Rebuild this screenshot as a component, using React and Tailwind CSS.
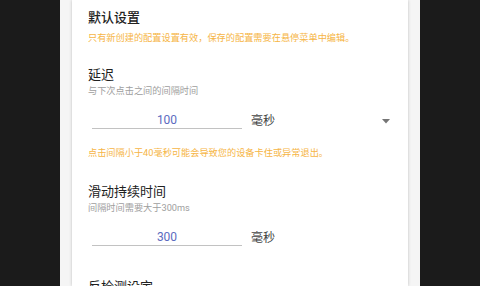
export default function App() {
  return (
    <div
      className="flex h-[286px] w-[480px] justify-center overflow-hidden bg-[#1b1b1b]"
      style={{ fontFamily: 'Roboto, "Noto Sans CJK SC", sans-serif' }}
    >
      <div className="h-full w-[360px] bg-[#f5f5f5] px-3">
        <div className="h-full bg-white px-4 pt-[10px] shadow-[0_0_3px_rgba(0,0,0,0.22)]">
          <SectionHeader
            title="默认设置"
            warning="只有新创建的配置设置有效，保存的配置需要在悬停菜单中编辑。"
          />

          <Field title="延迟" hint="与下次点击之间的间隔时间" className="mt-[23px]" />
          <NumberRow value="100" unit="毫秒" withSelect />
          <p className="mt-[18px] whitespace-nowrap text-[9.2px] leading-[12px] text-[#f6b545]">
            点击间隔小于40毫秒可能会导致您的设备卡住或异常退出。
          </p>

          <Field title="滑动持续时间" hint="间隔时间需要大于300ms" className="mt-[25px]" />
          <NumberRow value="300" unit="毫秒" />

          <p className="mt-[33px] text-[13px] leading-4 text-[#212121]">反检测设定</p>
        </div>
      </div>
    </div>
  );
}

function SectionHeader({ title, warning }) {
  return (
    <div>
      <p className="text-[13px] font-medium leading-4 text-[#212121]">{title}</p>
      <p className="mt-[6px] whitespace-nowrap text-[9.2px] leading-[12px] text-[#f6b545]">
        {warning}
      </p>
    </div>
  );
}

function Field({ title, hint, className }) {
  return (
    <div className={className}>
      <p className="text-[13px] leading-4 text-[#212121]">{title}</p>
      <p className="mt-[2px] text-[9.2px] leading-[12px] text-[#9e9e9e]">{hint}</p>
    </div>
  );
}

function NumberRow({ value, unit, withSelect }) {
  return (
    <div className="mt-[14px] flex items-end">
      <div className="ml-[4px] flex h-[18px] w-[150px] items-center justify-center border-b-[1.5px] border-[#c2c2c2] pt-[1px] text-[12px] text-[#5c6bc0]">
        {value}
      </div>
      <div className="ml-[9px] flex h-[18px] flex-1 items-center justify-between pt-[1px]">
        <span className="text-[12px] text-[#444]">{unit}</span>
        {withSelect && (
          <svg width="8" height="5" viewBox="0 0 8 5" className="mr-[2px] mt-[2px]">
            <path d="M0 0h8L4 4.5z" fill="#757575" />
          </svg>
        )}
      </div>
    </div>
  );
}
